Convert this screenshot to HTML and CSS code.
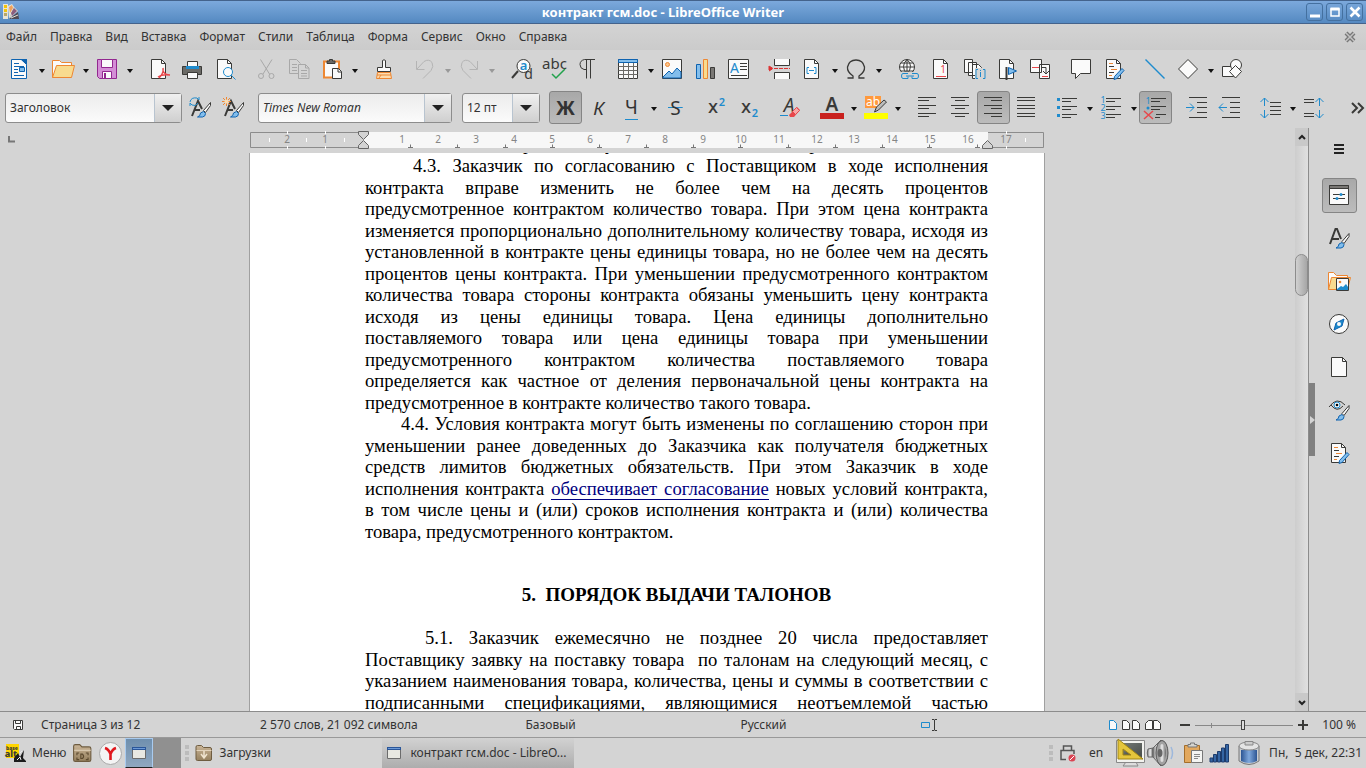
FILE: index.html
```html
<!DOCTYPE html>
<html lang="ru">
<head>
<meta charset="utf-8">
<title>контракт гсм.doc - LibreOffice Writer</title>
<link rel="stylesheet" href="styles.css">
</head>
<body>
<svg class="defs" aria-hidden="true">
  <defs>
    <linearGradient id="scr" x1="0" y1="0" x2="1" y2="1"><stop offset="0" stop-color="#777c78"/><stop offset="1" stop-color="#454a47"/></linearGradient>
    <linearGradient id="fold" x1="0" y1="0" x2="0" y2="1"><stop offset="0" stop-color="#c9b496"/><stop offset="1" stop-color="#96815f"/></linearGradient>
    <linearGradient id="blu" x1="0" y1="0" x2="1" y2="0"><stop offset="0" stop-color="#2d5694"/><stop offset=".5" stop-color="#7fa8dc"/><stop offset="1" stop-color="#2d5694"/></linearGradient>
    <linearGradient id="metal" x1="0" y1="0" x2="1" y2="0"><stop offset="0" stop-color="#777"/><stop offset=".5" stop-color="#eee"/><stop offset="1" stop-color="#666"/></linearGradient>
    <symbol id="i-brush" viewBox="0 0 14 16"><path class="p" d="M13.5.5l-7 8 2 2 5-7z"/><path d="M.5 15q3-1 3-4l3-1.500 2 2q0 3-3 3.500z" fill="#83beec" stroke="#0e63b0"/></symbol>
    <symbol id="i-note" viewBox="0 0 21 21"><path class="p" d="M2.500.5h10l4 4v15h-14z"/><path class="k" d="M12.500.5v4h4M5 7.500h5M5 13.500h5"/><path class="o" d="M5 4.500h4M7 10.500h6M5 16.500h3"/><path d="M18 9.500l2 2-7 8-3 1 .5-3z" fill="#83beec" stroke="#0e63b0"/></symbol>
    <symbol id="i-folder" viewBox="0 0 18 18"><path d="M1 3q0-1.500 1.500-1.500h4l2 2H15q1.500 0 1.500 1.500v10q0 1.500-1.500 1.500H2.500Q1 16.500 1 15z" fill="url(#fold)" stroke="#6e5c40"/><path d="M1.500 6.500h15" stroke="#e2d3bb"/></symbol>
    <symbol id="i-win" viewBox="0 0 14 12"><path d="M.5.5h13v11H.5z" fill="#e8e8e2" stroke="#6c6c6c"/><path d="M0 0h14v3H0z" fill="#2a5699"/><path d="M1 1.500h12" stroke="#6d9ad6"/></symbol>
  </defs>
</svg>

<header class="titlebar">
  <svg class="app-icon" width="16" height="16" viewBox="0 0 16 16"><path d="M0 0h5v15H0z" fill="#e8e4d8"/><path d="M1 1h3v3H1zM1 5h3v3H1z" fill="#f1c40c"/><path d="M1 9h3v3H1z" fill="#b9a86a"/><path d="M6 15L5 2l4-2 2 3z" fill="#e8e4d8"/><path d="M6 3l3-2 1 3-3 5z" fill="#f0a15c"/><path d="M6 15l5-12 4 4z" fill="#e0dccf"/><path d="M8 9l3-5 3 3-5 5z" fill="#8a5d7e"/><path d="M6 15l9-7 1 7z" fill="#4f4a55"/><path d="M8 14l7-3" stroke="#e8e0d4"/></svg>
  <h1>контракт гсм.doc - LibreOffice Writer</h1>
  <div class="win-buttons">
    <button aria-label="Свернуть"><svg width="16" height="16" viewBox="0 0 16 16"><path d="M3 12h10" stroke="#fff" stroke-width="3"/></svg></button>
    <button aria-label="Развернуть"><svg width="16" height="16" viewBox="0 0 16 16"><path d="M4 5h8v7H4z" fill="none" stroke="#fff" stroke-width="1.500"/><path d="M3.500 5h9" stroke="#fff" stroke-width="3"/></svg></button>
    <button aria-label="Закрыть"><svg width="16" height="16" viewBox="0 0 16 16"><path d="M3.500 3.500l9 9m0-9l-9 9" stroke="#fff" stroke-width="2.600"/></svg></button>
  </div>
</header>

<nav class="menubar">
  <button>Файл</button><button>Правка</button><button>Вид</button><button>Вставка</button><button>Формат</button><button>Стили</button><button>Таблица</button><button>Форма</button><button>Сервис</button><button>Окно</button><button>Справка</button>
  <button class="close-doc" aria-label="Закрыть документ"><svg width="12" height="12" viewBox="0 0 12 12"><path d="M2 2l8 8m0-8l-8 8" stroke="#777" stroke-width="4"/><path d="M2 2l8 8m0-8l-8 8" stroke="#c4c4c4" stroke-width="1.500"/></svg></button>
</nav>

<div class="toolbar standard">
  <div class="group">
    <button class="tool" aria-label="Создать"><svg viewBox="0 0 21 21"><path d="M2.500.5h10l5 5v14h-15z" fill="#fafafa" stroke="#0e63b0"/><path d="M11 0h7v6z" fill="#0e63b0"/><path d="M5 4.500h5M5 7.500h10M5 10.500h4M5 13.500h4M5 16.500h10" stroke="#0e63b0"/><path d="M10.500 8.500h5v4h-5z" fill="#83beec" stroke="#0e63b0"/></svg></button><button class="drop" aria-label="Меню создания"></button>
    <button class="tool" aria-label="Открыть"><svg class="wide" viewBox="0 0 23 21"><path d="M.5 18.500V1.500h7l2 2h10v3" fill="#fafafa" stroke="#ed8733"/><path d="M.5 18.500l4-12h18l-3 12z" fill="#f8db8f" stroke="#ed8733"/></svg></button><button class="drop" aria-label="Недавние файлы"></button>
    <button class="tool" aria-label="Сохранить"><svg viewBox="0 0 21 21"><path d="M.5.5h19v19H2.500l-2-2z" fill="#d48ed6" stroke="#92278f"/><path d="M4.500.5h11v8h-11zM5.500 12.500h9v7h-9z" fill="#fafafa" stroke="#92278f"/><path d="M8 14v5" stroke="#92278f" stroke-width="2"/></svg></button><button class="drop" aria-label="Варианты сохранения"></button>
  </div>
  <div class="group">
    <button class="tool" aria-label="Экспорт в PDF"><svg viewBox="0 0 21 21"><path class="p" d="M2.500.5h10l4 4v15h-14z"/><path class="k" d="M12.500.5v4h4"/><path d="M14 9q1 5-4 10M14 12q2 4 7 4M9 18q4-3 12-2" fill="none" stroke="#e8474b" stroke-width="1.500"/></svg></button>
    <button class="tool" aria-label="Печать"><svg viewBox="0 0 21 21"><path class="p" d="M5.500 2.500h10v6h-10z"/><path d="M.5 7.500h19v8H.5z" fill="#6b6a66" stroke="#3a3a38"/><path d="M4 7h13v3H4z" fill="#1e8bcd"/><path class="p" d="M5.500 13.500h10v6h-10z"/></svg></button>
    <button class="tool" aria-label="Просмотр печати"><svg viewBox="0 0 21 21"><path class="p" d="M2.500.5h10l4 4v15h-14z"/><path class="k" d="M12.500.5v4h4"/><circle cx="13" cy="13" r="4.500" fill="#fafafa" stroke="#1e8bcd"/><path class="b" d="M16 16l4.500 4.500"/></svg></button>
  </div>
  <div class="group">
    <button class="tool" disabled aria-label="Вырезать"><svg viewBox="0 0 21 21"><path class="g" d="M4.500.5l9 14.500M16 .5L7 15"/><circle class="g" cx="5" cy="17" r="2.500"/><circle class="g" cx="15.500" cy="17" r="2.500"/></svg></button>
    <button class="tool" disabled aria-label="Копировать"><svg viewBox="0 0 21 21"><path class="g" d="M9 14.500H.5V.5h7l4 4M3 5.500h5M3 8.500h5M3 11.500h5"/><path class="g" d="M9.500 5.500h7l3.500 3.500v10.500H9.500zM16.500 5.500V9h3.500M12 11.500h6M12 14.500h6M12 17h6"/></svg></button>
    <button class="tool" aria-label="Вставить"><svg viewBox="0 0 21 21"><path d="M2 2.500h15v16H2z" fill="#fafafa" stroke="#ed8733" stroke-width="2"/><path d="M5 4.500V2h2.500V.5h3V2H13v2.500z" fill="#6b6a66" stroke="#3a3a38"/><path class="p" d="M10.500 9.500h6l3 3v7h-9z"/><path class="k" d="M16 9.500v3.500h3.500"/></svg></button><button class="drop" aria-label="Варианты вставки"></button>
  </div>
  <div class="group">
    <button class="tool" aria-label="Копировать формат"><svg viewBox="0 0 21 21"><path class="p" d="M8.500 8.500V1.500Q10 0 11.500 1.500v7h5v4h-13v-4z"/><path d="M3.500 13.500h13l1 6h-15z" fill="#fddcae" stroke="#ed8733"/><path d="M3 16h14M5 19l2-3" class="o"/></svg></button>
  </div>
  <div class="group">
    <button class="tool" disabled aria-label="Отменить"><svg viewBox="0 0 21 21"><path class="g2" d="M1.500 2v8.500h8M2 10l7-7.500q5-3 8 1 2 4-1 8l-8 8"/></svg></button><button class="drop" disabled aria-label="История отмены"></button>
    <button class="tool" disabled aria-label="Вернуть"><svg viewBox="0 0 21 21"><path class="g2" d="M18.500 2v8.500h-8M18 10l-7-7.500q-5-3-8 1-2 4 1 8l8 8"/></svg></button><button class="drop" disabled aria-label="История возврата"></button>
  </div>
  <div class="group">
    <button class="tool" aria-label="Найти и заменить"><svg viewBox="0 0 21 21"><path d="M7 12L1 19" stroke="#3a3a38" stroke-width="2"/><circle class="p" cx="12.500" cy="7" r="6.500"/><text x="12.500" y="11" class="t-a">a</text><text x="17.500" y="20" class="t-d">d</text></svg></button>
    <button class="tool" aria-label="Проверка орфографии"><svg class="wide" viewBox="0 0 23 21"><text x="11.500" y="10" class="t-abc">abc</text><path d="M9 15l4 4 9-9" fill="none" stroke="#22a24c" stroke-width="1.500"/></svg></button>
    <button class="tool" aria-label="Непечатаемые символы"><svg viewBox="0 0 21 21"><path class="k" d="M9.500 10.500H7Q3 9.500 3 5.500T7.500.5H18M9.500.5v19M13.500.5v19"/></svg></button>
  </div>
  <div class="group">
    <button class="tool" aria-label="Таблица"><svg viewBox="0 0 21 21"><path class="p" d="M.5.5h19v19H.5z"/><path d="M.5.5h19v3H.5z" fill="#83beec" stroke="#0e63b0"/><path d="M.5 7.500h19M.5 11.500h19M.5 15.500h19M5.500 4v16M10.500 4v16M15.500 4v16" stroke="#6b6a66"/></svg></button><button class="drop" aria-label="Размер таблицы"></button>
    <button class="tool" aria-label="Изображение"><svg viewBox="0 0 21 21"><path class="p" d="M.5.5h19v19H.5z"/><circle cx="5.500" cy="5.500" r="2" fill="#fbc58b" stroke="#ed8733"/><path d="M1 18l6-6 3 3 5-6 4 4v6H1z" fill="#83beec" stroke="#0e63b0"/></svg></button>
    <button class="tool" aria-label="Диаграмма"><svg viewBox="0 0 21 21"><path d="M1.500 5.500h4v14h-4z" fill="#83beec" stroke="#0e63b0"/><path d="M8.500.5h4v19h-4z" fill="#f8db8f" stroke="#ed8733"/><path d="M15.500 8.500h4v11h-4z" fill="#797774" stroke="#3a3a38"/></svg></button>
    <button class="tool" aria-label="Текстовое поле"><svg class="wide" viewBox="0 0 23 21"><path class="p" d="M1.500.5h20v19h-20z"/><text x="7.500" y="14" class="t-box">A</text><path class="k" d="M13 4.500h7M13 7.500h7M13 10.500h7M4 16.500h16"/></svg></button>
  </div>
  <div class="group">
    <button class="tool" aria-label="Разрыв страницы"><svg viewBox="0 0 21 21"><path d="M6 0h14v7H6zM6 13h14v7H6z" fill="#fafafa"/><path class="k" d="M5.500 0v6.500h15V0M5.500 20v-6.500h15V20"/><path d="M0 7v5l4-2.500zM5 9.500h16" fill="#d33" stroke="#d33" stroke-dasharray="4 1"/></svg></button>
    <button class="tool" aria-label="Поле"><svg viewBox="0 0 21 21"><path class="p" d="M2.500.5h10l4 4v15h-14z"/><path class="k" d="M12.500.5v4h4"/><path class="b" d="M7 8.500H5v6h2M12 8.500h2v6h-2M7 11.500h5"/></svg></button><button class="drop" aria-label="Виды полей"></button>
    <button class="tool" aria-label="Специальный символ"><svg viewBox="0 0 21 21"><path d="M1.500 19h5.500v-2Q1 13 1.500 8 3 1 10 1t8.500 7q.5 5-5.500 9v2h5.500" fill="none" stroke="#3a3a38" stroke-width="1.300"/></svg></button><button class="drop" aria-label="Недавние символы"></button>
  </div>
  <div class="group">
    <button class="tool" aria-label="Гиперссылка"><svg viewBox="0 0 21 21"><circle class="p" cx="9" cy="8" r="7.500"/><path class="k" d="M9 .5v15M1.500 8h15M3 4h12M3 12h12M9 .5Q2 7 9 15.500M9 .5q7 6 0 15"/><path d="M3 13h18v8H3z" fill="#d4d4d4"/><path class="b" d="M10 14.500H5q-1.500 0-1.500 2.500T5 19.500h5v-2M14 14.500h5q1.500 0 1.500 2.500T19 19.500h-5v-2M8 17h8"/></svg></button>
    <button class="tool" aria-label="Сноска"><svg viewBox="0 0 21 21"><path class="p" d="M2.500.5h10l4 4v15h-14z"/><path class="k" d="M12.500.5v4h4"/><text x="12" y="14" class="t-fn">1</text><path d="M5 17.500h10" stroke="#e8474b"/></svg></button>
    <button class="tool" aria-label="Концевая сноска"><svg class="wide" viewBox="0 0 23 21"><path class="p" d="M1.500.5h8v13h-8zM5.500 3.500h8v13h-8zM9.500 5.500h6l3 3v11h-9z"/><path d="M12 9h11v12H12z" fill="#d4d4d4"/><path class="b" d="M15 10.500h-2v9h2M20 10.500h2v9h-2M17.500 13v5M17.500 11v1"/></svg></button>
    <button class="tool" aria-label="Закладка"><svg viewBox="0 0 21 21"><path class="p" d="M2.500.5h10l4 4v15h-14z"/><path class="k" d="M12.500.5v4h4"/><path d="M9.500 8v13" stroke="#3a3a38" stroke-width="2"/><path d="M11.500 8.500v7l8-3.500z" fill="#83beec" stroke="#0e63b0"/></svg></button>
    <button class="tool" aria-label="Перекрёстная ссылка"><svg viewBox="0 0 21 21"><path class="p" d="M9.500 5.500h10v14h-10zM.5.5h11v13H.5z"/><path class="k" d="M11 8.500h5v6M13 12l3 3 3-3"/><path d="M2 8.500h7M12 17.500h6" stroke="#e8474b"/></svg></button>
  </div>
  <div class="group">
    <button class="tool" aria-label="Комментарий"><svg viewBox="0 0 21 21"><path class="p" d="M.5.5h19v14h-10l-5 5v-5h-4z"/></svg></button>
    <button class="tool" aria-label="Запись изменений"><svg><use href="#i-note"/></svg></button>
  </div>
  <div class="group">
    <button class="tool" aria-label="Линия"><svg viewBox="0 0 21 21"><path d="M.5.5l19 19" stroke="#1e8bcd" stroke-width="1.400"/></svg></button>
    <button class="tool" aria-label="Фигуры"><svg viewBox="0 0 21 21"><path class="p" d="M10 .5l9.500 9.500-9.500 9.500L.5 10z"/></svg></button><button class="drop" aria-label="Выбор фигуры"></button>
    <button class="tool" aria-label="Рисование"><svg viewBox="0 0 21 21"><path class="p" d="M.5 7.500h11v10H.5z"/><circle class="p" cx="14" cy="6" r="5.500"/><path class="p" d="M13.500 6.500l6 6-6 6.500-6-6.500z"/></svg></button>
  </div>
</div>

<div class="toolbar formatting">
  <label class="combo style-combo"><select aria-label="Стиль абзаца"><option>Заголовок</option></select><span></span></label>
  <div class="group">
    <button class="tool" aria-label="Обновить стиль"><svg class="wide" viewBox="0 0 23 21"><path d="M3 19L9 4l4 8M5 13h6" fill="none" stroke="#3a3a38" stroke-width="2"/><path d="M1 5q1-5 7-4l2 2V0M9 6q-2 4-6 2L1 6v3" fill="none" stroke="#1e8bcd"/><use href="#i-brush" x="8" y="5" width="14" height="16"/></svg></button>
    <button class="tool" aria-label="Создать стиль"><svg class="wide" viewBox="0 0 23 21"><path d="M3 19L9 4l4 8M5 13h6" fill="none" stroke="#3a3a38" stroke-width="2"/><path d="M4.500 0v9M0 4.500h9M1 1l7 7M8 1L1 8" stroke="#ed8733"/><circle cx="4.500" cy="4.500" r="2" fill="#fddcae"/><use href="#i-brush" x="8" y="5" width="14" height="16"/></svg></button>
  </div>
  <label class="combo font-combo"><select aria-label="Имя шрифта"><option>Times New Roman</option></select><span></span></label>
  <label class="combo size-combo"><select aria-label="Размер шрифта"><option>12 пт</option></select><span></span></label>
  <div class="group">
    <button class="tool pressed letter bold" aria-label="Полужирный">Ж</button>
    <button class="tool letter ital" aria-label="Курсив">К</button>
    <button class="tool letter under" aria-label="Подчёркнутый"><span>Ч</span></button><button class="drop" aria-label="Вид подчёркивания"></button>
    <button class="tool letter strike" aria-label="Зачёркнутый"><span>S</span></button>
  </div>
  <div class="group">
    <button class="tool" aria-label="Верхний индекс"><svg viewBox="0 0 21 21"><text x="7" y="16" class="t-x">X</text><text x="16" y="9" class="t-2">2</text></svg></button>
    <button class="tool" aria-label="Нижний индекс"><svg viewBox="0 0 21 21"><text x="7" y="16" class="t-x">X</text><text x="16" y="20" class="t-2">2</text></svg></button>
  </div>
  <div class="group">
    <button class="tool" aria-label="Очистить форматирование"><svg viewBox="0 0 21 21"><text x="9" y="15" class="t-clear">A</text><path class="b" d="M0 18.500h8"/><path d="M9 18l8-8 3 3-6 7h-4z" fill="#e8474b"/><path d="M12.500 14.500l4-4 3 3-4 4z" fill="#f7a7a7" stroke="#e8474b"/></svg></button>
  </div>
  <div class="group">
    <button class="tool" aria-label="Цвет шрифта"><svg class="color" viewBox="0 0 24 24"><text x="12" y="15" class="t-color">A</text><path d="M0 17h24v6H0z" fill="#c9211e"/></svg></button><button class="drop" aria-label="Выбор цвета шрифта"></button>
    <button class="tool" aria-label="Цвет выделения"><svg class="color" viewBox="0 0 24 24"><path d="M1 0h16v12H1z" fill="#ff993c"/><text x="9" y="10" class="t-ab">ab</text><path d="M20 4l2.500 2-8 8-4 2 2-5z" fill="#bbb" stroke="#3a3a38"/><path d="M0 17h24v6H0z" fill="#ff0"/></svg></button><button class="drop" aria-label="Выбор цвета выделения"></button>
  </div>
  <div class="group">
    <button class="tool" aria-label="По левому краю"><svg viewBox="0 0 21 21"><path class="k" d="M1 .5h18M1 3.500h11M1 8.500h18M1 11.500h11M1 16.500h18M1 19.500h11"/></svg></button>
    <button class="tool" aria-label="По центру"><svg viewBox="0 0 21 21"><path class="k" d="M1 .5h18M5 3.500h10M1 8.500h18M5 11.500h10M1 16.500h18M5 19.500h10"/></svg></button>
    <button class="tool pressed" aria-label="По правому краю"><svg viewBox="0 0 21 21"><path class="k" d="M1 .5h18M8 3.500h11M1 8.500h18M8 11.500h11M1 16.500h18M8 19.500h11"/></svg></button>
    <button class="tool" aria-label="По ширине"><svg viewBox="0 0 21 21"><path class="k" d="M1 .5h18M1 3.500h18M1 8.500h18M1 11.500h18M1 16.500h18M1 19.500h18"/></svg></button>
  </div>
  <div class="group">
    <button class="tool" aria-label="Маркированный список"><svg viewBox="0 0 21 21"><path class="k" d="M5 1.500h15M5 4.500h9M5 9.500h15M5 12.500h9M5 17.500h15M5 20.500h9"/><path d="M0 1h3v3H0zM0 9h3v3H0zM0 17h3v3H0z" fill="#1e8bcd"/></svg></button><button class="drop" aria-label="Вид маркеров"></button>
    <button class="tool" aria-label="Нумерованный список"><svg viewBox="0 0 21 21"><path class="k" d="M5 1.500h15M5 4.500h9M5 9.500h15M5 12.500h9M5 17.500h15M5 20.500h9"/><text x="2" y="6" class="t-n">1</text><text x="2" y="14" class="t-n">2</text><text x="2" y="22" class="t-n">3</text></svg></button><button class="drop" aria-label="Вид нумерации"></button>
    <button class="tool pressed" aria-label="Без списка"><svg viewBox="0 0 21 21"><path class="k" d="M6 1.500h15M6 4.500h9M6 9.500h15M6 12.500h9M11 17.500h10M10 20.500h5"/><text x="3" y="7" class="t-n">1</text><circle cx="3" cy="11" r="1.500" fill="#1e8bcd"/><path d="M-1 14l9 8M8 14l-9 8" stroke="#e8474b" stroke-width="1.500"/></svg></button>
  </div>
  <div class="group">
    <button class="tool" aria-label="Увеличить отступ"><svg viewBox="0 0 21 21"><path class="k" d="M3 .5h18M11 5.500h10M11 10.500h10M11 15.500h10M3 20.500h18"/><path class="b" d="M0 10.500h8M4 6.500l4 4-4 4"/></svg></button>
    <button class="tool" aria-label="Уменьшить отступ"><svg viewBox="0 0 21 21"><path class="k" d="M3 .5h18M11 5.500h10M11 10.500h10M11 15.500h10M3 20.500h18"/><path class="b" d="M0 10.500h8M4 6.500l-4 4 4 4"/></svg></button>
  </div>
  <div class="group">
    <button class="tool" aria-label="Интервал строк"><svg viewBox="0 0 21 21"><path class="k" d="M10 5.500h11M10 9.500h11M10 13.500h11M10 17.500h11"/><path class="b" d="M4.500 1v8M.5 5l4-4 4 4M4.500 13v8M.5 17l4 4 4-4"/></svg></button><button class="drop" aria-label="Выбор интервала"></button>
    <button class="tool" aria-label="Интервал абзаца"><svg viewBox="0 0 21 21"><path class="k" d="M0 2.500h10M0 5.500h10M0 16.500h10M0 19.500h10"/><path class="b" d="M15.500 1v8M11.500 5l4-4 4 4M15.500 13v8M11.500 17l4 4 4-4"/></svg></button>
  </div>
  <button class="more" aria-label="Ещё"><svg width="13" height="12" viewBox="0 0 13 12"><path d="M1 1l5 5-5 5M7 1l5 5-5 5" fill="none" stroke="#3a3a38" stroke-width="2"/></svg></button>
</div>

<main class="work">
  <section class="editor">
    <div class="ruler-row">
      <svg class="corner" width="8" height="7" viewBox="0 0 8 7"><path d="M1 0v5.500h6" fill="none" stroke="#777" stroke-width="2"/></svg>
      <svg class="ruler" viewBox="0 0 794 18" width="794" height="18">
        <path d="M.5 1.500h793v15H.5z" fill="#d4d4d4" stroke="#8c8c8c"/>
        <path d="M113 1h625v16H113z" fill="#f7f7f7"/>
        <path d="M19.500 7v4M56.500 7v4M94.500 7v4M37.500 0v3M37.500 15v3M75.500 0v3M75.500 15v3M756.500 0v3M756.500 15v3M775.500 7v4" stroke="#fff"/>
        <g class="ruler-n"><text x="37" y="12">2</text><text x="75" y="12">1</text><text x="152" y="12">1</text><text x="188" y="12">2</text><text x="226" y="12">3</text><text x="264" y="12">4</text><text x="302" y="12">5</text><text x="340" y="12">6</text><text x="378" y="12">7</text><text x="415" y="12">8</text><text x="453" y="12">9</text><text x="491" y="12">10</text><text x="529" y="12">11</text><text x="567" y="12">12</text><text x="604" y="12">13</text><text x="642" y="12">14</text><text x="680" y="12">15</text><text x="718" y="12">16</text><text x="756" y="12">17</text></g>
        <path d="M158 16.500h5m-2.500-3v3M205 16.500h5m-2.500-3v3M253 16.500h5m-2.500-3v3M300 16.500h5m-2.500-3v3M347 16.500h5m-2.500-3v3M394 16.500h5m-2.500-3v3M441 16.500h5m-2.500-3v3M488 16.500h5m-2.500-3v3M536 16.500h5m-2.500-3v3M583 16.500h5m-2.500-3v3M630 16.500h5m-2.500-3v3M677 16.500h5m-2.500-3v3M725 16.500h5m-2.500-3v3" stroke="#777" fill="none"/>
        <path d="M108.500.5h10v3l-5 5-5-5zM113.500 9.500l5 5v3h-10v-3zM737.500 9.500l5 5v3h-10v-3z" fill="#d4d4d4" stroke="#666"/>
      </svg>
    </div>
    <div class="canvas">
      <article class="page">
        <p class="above"><span class="w1">при</span><span class="w2">условии</span><span class="w3">срок</span></p>
        <p><span class="line in48">4.3. Заказчик по согласованию с Поставщиком в ходе исполнения</span> <span class="line">контракта вправе изменить не более чем на десять процентов</span> <span class="line">предусмотренное контрактом количество товара. При этом цена контракта</span> <span class="line">изменяется пропорционально дополнительному количеству товара, исходя из</span> <span class="line">установленной в контракте цены единицы товара, но не более чем на десять</span> <span class="line">процентов цены контракта. При уменьшении предусмотренного контрактом</span> <span class="line">количества товара стороны контракта обязаны уменьшить цену контракта</span> <span class="line">исходя из цены единицы товара. Цена единицы дополнительно</span> <span class="line">поставляемого товара или цена единицы товара при уменьшении</span> <span class="line">предусмотренного контрактом количества поставляемого товара</span> <span class="line">определяется как частное от деления первоначальной цены контракта на</span> <span class="line last">предусмотренное в контракте количество такого товара.</span></p>
        <p><span class="line in36">4.4. Условия контракта могут быть изменены по соглашению сторон при</span> <span class="line">уменьшении ранее доведенных до Заказчика как получателя бюджетных</span> <span class="line">средств лимитов бюджетных обязательств. При этом Заказчик в ходе</span> <span class="line">исполнения контракта <a href="#soglasovanie">обеспечивает согласование</a> новых условий контракта,</span> <span class="line">в том числе цены и (или) сроков исполнения контракта и (или) количества</span> <span class="line last">товара, предусмотренного контрактом.</span></p>
        <h2>5.&nbsp; ПОРЯДОК ВЫДАЧИ ТАЛОНОВ</h2>
        <p><span class="line in60">5.1. Заказчик ежемесячно не позднее 20 числа предоставляет</span> <span class="line">Поставщику заявку на поставку товара&nbsp; по талонам на следующий месяц, с</span> <span class="line">указанием наименования товара, количества, цены и суммы в соответствии с</span> <span class="line">подписанными спецификациями, являющимися неотъемлемой частью</span></p>
      </article>
    </div>
  </section>
  <div class="scrollbar">
    <button aria-label="Вверх"><svg width="8" height="5" viewBox="0 0 8 5"><path d="M1 4l3-3 3 3" fill="none" stroke="#222" stroke-width="2"/></svg></button>
    <div class="track"><div class="thumb"></div></div>
    <button aria-label="Вниз"><svg width="8" height="5" viewBox="0 0 8 5"><path d="M1 1l3 3 3-3" fill="none" stroke="#222" stroke-width="2"/></svg></button>
  </div>
  <aside class="sidebar">
    <button class="handle" aria-label="Скрыть панель"><svg width="5" height="8" viewBox="0 0 5 8"><path d="M0 0l5 4-5 4z" fill="#d4d4d4"/></svg></button>
    <div class="tabs">
      <button class="tab menu" aria-label="Параметры панели"><svg viewBox="0 0 21 21"><path d="M5 6h10M5 10h10M5 14h10" stroke="#222" stroke-width="2"/></svg></button>
      <button class="tab pressed" aria-label="Свойства"><svg viewBox="0 0 21 21"><path class="p" d="M.5.5h19v19H.5z"/><path d="M.5.5h19v3H.5z" fill="#797774" stroke="#3a3a38"/><path class="k" d="M4 9.500h12M4 13.500h12"/><circle cx="12" cy="9.500" r="1.500" fill="#1e8bcd"/><circle cx="8" cy="13.500" r="1.500" fill="#1e8bcd"/></svg></button>
      <button class="tab" aria-label="Стили"><svg viewBox="0 0 21 21"><path d="M1 16L6.500 1h1.500L12 11M3 11h7" fill="none" stroke="#3a3a38" stroke-width="2"/><use href="#i-brush" x="6" y="5" width="15" height="16"/></svg></button>
      <button class="tab" aria-label="Галерея"><svg class="wide" viewBox="0 0 23 21"><path d="M.5 18.500V1.500h5l3 3h11v2" fill="#fafafa" stroke="#ed8733"/><path d="M.5 18.500l3-12h19l-3 12z" fill="#f8db8f" stroke="#ed8733"/><path class="p" d="M8.500 7.500h12v12h-12z"/><circle cx="12" cy="11" r="1.300" fill="#ed8733"/><path d="M9 18l4-3 2 1 3-3 2 3v3H9z" fill="#1e8bcd"/></svg></button>
      <button class="tab" aria-label="Навигатор"><svg viewBox="0 0 21 21"><circle class="p" cx="10" cy="10" r="9.500"/><path d="M15 5l-2 7-8 4 2-7z" fill="#1e8bcd" stroke="#0e63b0"/><circle cx="10" cy="10" r="2" fill="#fafafa"/></svg></button>
      <button class="tab" aria-label="Страница"><svg viewBox="0 0 21 21"><path class="p" d="M2.500.5h11l4 4v15h-15z"/><path class="k" d="M13.500.5v4h4"/></svg></button>
      <button class="tab" aria-label="Инспектор стилей"><svg viewBox="0 0 21 21"><path class="k" d="M0 7Q8-4 16 5M2 5q6 8 12 1"/><circle cx="8" cy="5" r="3" fill="#fafafa" stroke="#1e8bcd"/><circle cx="8" cy="5" r="1.300"/><use href="#i-brush" x="6" y="5" width="15" height="16"/></svg></button>
      <button class="tab" aria-label="Управление изменениями"><svg><use href="#i-note"/></svg></button>
    </div>
  </aside>
</main>

<footer class="statusbar">
  <svg class="s-save" width="10" height="10" viewBox="0 0 10 10"><path class="p" d="M.5.5h9v9h-8l-1-1z"/><path class="k" d="M2.500.5v3h5v-3M3.500 9.500v-3h4v3"/></svg>
  <span class="s-page">Страница 3 из 12</span>
  <span class="s-words">2 570 слов, 21 092 символа</span>
  <span class="s-style">Базовый</span>
  <span class="s-lang">Русский</span>
  <svg class="s-ins" width="17" height="12" viewBox="0 0 17 12"><path d="M.5 3.500h8v5h-8z" fill="none" stroke="#1e8bcd"/><path class="k" d="M11 .5h2l.5.5.5-.5h2M13.500 1v10M11 11.500h2l.5-.5.5.5h2"/></svg>
  <div class="views">
    <button aria-label="Одна страница"><svg width="8" height="10" viewBox="0 0 8 10"><path d="M.5.5h4l3 3v6h-7z" fill="#fafafa" stroke="#1e8bcd"/></svg></button>
    <button aria-label="Несколько страниц"><svg width="18" height="10" viewBox="0 0 18 10"><path class="p" d="M.5.5h4l3 3v6h-7zM10.500.5h4l3 3v6h-7z"/></svg></button>
    <button aria-label="Режим книги"><svg width="16" height="10" viewBox="0 0 16 10"><path class="p" d="M7.500.5h-4l-3 3v6h7zM8.500.5h4l3 3v6h-7z"/></svg></button>
  </div>
  <div class="zoom">
    <button aria-label="Уменьшить"><svg width="10" height="10" viewBox="0 0 10 10"><path d="M0 5h10" stroke="#3a3a38" stroke-width="2"/></svg></button>
    <input type="range" min="0" max="100" value="49" aria-label="Масштаб">
    <button aria-label="Увеличить"><svg width="10" height="10" viewBox="0 0 10 10"><path d="M0 5h10M5 0v10" stroke="#3a3a38" stroke-width="2"/></svg></button>
  </div>
  <span class="s-zoom">100 %</span>
</footer>

<footer class="taskbar">
  <button class="start"><svg width="23" height="19" viewBox="0 0 23 19"><path d="M2 0h13v14H2z" fill="#ffd500"/><text x="8" y="6" class="t-base">base</text><text x="7" y="13" class="t-alt">alt</text><path d="M10 14l4-5 2 4 4-7-1 8 3 3v1H10z" fill="#1b1b1b"/><path d="M13 16l3-3 1 3M16 9l2-2" stroke="#eee" fill="none"/></svg>Меню</button>
  <button class="launch" aria-label="Рабочий стол"><svg width="21" height="20" viewBox="0 0 18 18"><use href="#i-folder"/><path d="M4 11V9h2M12 9h2v2M4 13v2h2M12 15h2v-2" fill="none" stroke="#5c4a2f"/><path d="M7.500 10v4H9q2-2 0-4z" fill="none" stroke="#5c4a2f"/></svg></button>
  <button class="launch" aria-label="Яндекс Браузер"><svg width="23" height="23" viewBox="0 0 23 23"><circle cx="11.500" cy="11.500" r="11" fill="#f4f4f4" stroke="#aaa"/><path d="M6 6q3.500 1 5.500 6m5.500-6q-3.500 1-5.500 6v6" fill="none" stroke="#e0171d" stroke-width="2.600"/></svg></button>
  <div class="pager"><button class="desk on" aria-label="Стол 1"><svg width="14" height="12"><use href="#i-win"/></svg></button><button class="desk" aria-label="Стол 2"></button></div>
  <span class="grip"></span>
  <button class="task downloads"><svg width="18" height="18"><use href="#i-folder"/><path d="M9 7v6M6 10l3 4 3-4" fill="none" stroke="#f0e4cf" stroke-width="1.500"/></svg>Загрузки</button>
  <button class="task current"><svg width="14" height="12"><use href="#i-win"/></svg><span>контракт гсм.doc - LibreO...</span></button>
  <div class="tray">
    <span class="grip"></span>
    <svg class="t-print" width="18" height="18" viewBox="0 0 18 18"><path d="M4.500 6V2h8v4M3 15.500H2v-9h13V10M2 15.500h5" fill="none" stroke="#555" stroke-width="1.500"/><circle cx="13" cy="14" r="3.500" fill="#da4453"/><path d="M11 16l4-4" stroke="#fff"/></svg>
    <span class="lang">en</span>
    <svg width="32" height="30" viewBox="0 0 32 30"><path d="M12 24h10l2 4H9z" fill="#ddd" stroke="#888"/><path d="M2.500 2.500h28v22h-28z" fill="#f2f2ee" stroke="#888"/><path d="M5 5h23v16H5z" fill="url(#scr)"/><path d="M4 1v20h25z" fill="#e5c63c" stroke="#a08514"/><path d="M9 11v6h8z" fill="url(#scr)" stroke="#a08514"/></svg>
    <svg width="28" height="28" viewBox="0 0 28 28"><path d="M2 10q-1.500 4 0 8h5V9z" fill="url(#metal)" stroke="#666"/><path d="M7 9l8-8v26l-8-9z" fill="url(#metal)" stroke="#666"/><ellipse cx="16" cy="14" rx="6" ry="12.500" fill="#a2a2a2" stroke="#555"/><ellipse cx="16" cy="14" rx="4" ry="9" fill="url(#metal)"/><ellipse cx="14" cy="14" rx="2.500" ry="4" fill="#666"/><path d="M25 8q3 6 0 12" stroke="#9db8dc" fill="none" stroke-width="1.500"/></svg>
    <svg class="t-clip" width="20" height="22" viewBox="0 0 20 22"><path d="M1.500 3.500h15v17h-15z" fill="#e2a85e" stroke="#a46e2b"/><path d="M5 5V2.500h2.500V1h4v1.500H14V5z" fill="#d4d4d0" stroke="#777"/><path d="M8.500 8.500h11v12h-11z" fill="#f4f4f2" stroke="#777"/><path d="M11 12.500h6M11 14.500h6M11 16.500h4" stroke="#888"/></svg>
    <svg class="t-net" width="20" height="20" viewBox="0 0 20 20"><path d="M1 15h3v4H1zM4.500 11.500h3V19h-3zM8.500 8.500h3V19h-3zM12.500 5h3v14h-3zM16.500 1.500h3V19h-3z" fill="#3465a4" stroke="#1c3b6c"/></svg>
    <svg class="t-disk" width="22" height="26" viewBox="0 0 22 26"><path d="M1 6v15q10 7 20 0V6z" fill="#c8cdd2" stroke="#777"/><path d="M3 10v11q8 4 16 0V10z" fill="url(#blu)"/><ellipse cx="11" cy="6" rx="10" ry="4" fill="#e4e4e4" stroke="#888"/><path d="M7 5V1.500h8V5z" fill="#ccc" stroke="#888"/></svg>
    <time>Пн,&nbsp; 5 дек, 22:31</time>
  </div>
</footer>
</body>
</html>
```
FILE: styles.css
```css
* { box-sizing: border-box; }
body {
  margin: 0;
  height: 100vh;
  display: flex;
  flex-direction: column;
  overflow: hidden;
  background: #d4d4d4;
  color: #333;
  font: 12px/18px "Noto Sans", sans-serif;
}
button {
  margin: 0;
  padding: 0;
  border: 0;
  background: none;
  color: inherit;
  font: inherit;
  display: flex;
  align-items: center;
  justify-content: center;
  flex: none;
}
svg { display: block; flex: none; overflow: visible; }
.defs { position: absolute; width: 0; height: 0; }
.p { fill: #fafafa; stroke: #3a3a38; }
.k { fill: none; stroke: #3a3a38; }
.b { fill: none; stroke: #1e8bcd; }
.o { fill: none; stroke: #ed8733; }
.g { fill: none; stroke: #a8a8a8; }
.g2 { fill: none; stroke: #b4b4b4; }
svg text { text-anchor: middle; fill: #3a3a38; }

/* Title bar */
.titlebar {
  display: flex;
  align-items: center;
  height: 24px;
  padding: 0 3px;
  flex: none;
  border-top: 1px solid #44638c;
  border-bottom: 1px solid #44638c;
  background: linear-gradient(#7ca9dc, #5489c1);
}
.titlebar h1 {
  flex: 1;
  margin: 0 0 0 1px;
  text-align: center;
  font-size: 13px;
  line-height: 18px;
  font-weight: 700;
  color: #fff;
}
.win-buttons { display: flex; gap: 3px; }
.win-buttons button {
  width: 17px;
  height: 18px;
  border: 1px solid #44709f;
  border-radius: 3px;
}

/* Menu bar */
.menubar {
  display: flex;
  align-items: center;
  gap: 13px;
  height: 26px;
  padding: 0 10px 0 6px;
  flex: none;
  background: linear-gradient(#d3d3d3, #cbcbcb);
}
.close-doc { margin-left: auto; }

/* Toolbars */
.toolbar { display: flex; align-items: center; flex: none; height: 39px; gap: 8px; }
.standard { padding-left: 3px; }
.formatting { padding: 0 2px 2px 5px; }
.group { display: flex; align-items: center; }
.tool { width: 33px; height: 33px; border-radius: 3px; }
.tool svg, .tab svg { width: 21px; height: 21px; }
.tool svg.wide, .tab svg.wide { width: 23px; }
.tool svg.color { width: 24px; height: 24px; }
.drop { width: 11px; height: 33px; }
.drop::after {
  content: "";
  margin-top: 3px;
  border: 3px solid transparent;
  border-top: 4px solid #111;
  border-bottom: 0;
}
.drop:disabled::after { border-top-color: #999; }
.pressed {
  background: linear-gradient(#a8a8a8, #bcbcbc);
  border: 1px solid #858585;
  border-radius: 3px;
}
.letter { font-size: 19px; line-height: 24px; }
.bold { font-weight: 700; }
.ital { font-style: italic; }
.under span { height: 25px; border-bottom: 1px solid #1e8bcd; line-height: 24px; }
.strike span {
  padding: 0 2px;
  background: linear-gradient(#1e8bcd, #1e8bcd) center / 100% 1px no-repeat;
}
.combo {
  display: grid;
  grid-template-columns: 1fr 27px;
  height: 30px;
  flex: none;
  border: 1px solid #8c8c8c;
  border-radius: 3px;
  background: linear-gradient(#ececec, #fbfbfb);
}
.combo select {
  grid-area: 1 / 1 / 2 / 3;
  appearance: none;
  border: 0;
  background: none;
  padding: 0 4px;
  color: #333;
  font: inherit;
}
.combo span {
  grid-area: 1 / 2;
  display: flex;
  align-items: center;
  justify-content: center;
  pointer-events: none;
  border-left: 1px solid #b8c4d0;
  background: linear-gradient(#f0f0f0, #cfcfcf);
}
.combo span::after {
  content: "";
  border: 6px solid transparent;
  border-top-color: #222;
  border-bottom: 0;
}
.style-combo { width: 177px; margin-right: -6px; }
.font-combo { width: 194px; font-style: italic; }
.size-combo { width: 78px; margin: 0 1px 0 2px; }
.more { margin-left: auto; }
svg .t-a { font-size: 13px; font-weight: 600; fill: #1e8bcd; }
svg .t-d { font-size: 14px; }
svg .t-abc { font-size: 15px; }
svg .t-box { font-size: 14px; fill: #1e8bcd; }
svg .t-fn { font-size: 10px; fill: #e8474b; }
svg .t-x { font-size: 15px; font-weight: 600; }
svg .t-2 { font-size: 11px; font-weight: 600; fill: #1e8bcd; }
svg .t-clear { font-size: 19px; font-style: italic; }
svg .t-color { font-size: 19px; font-weight: 600; }
svg .t-ab { font-size: 12px; fill: #fff; }
svg .t-n { font-size: 9px; fill: #1e8bcd; }
svg .t-base { font-size: 5px; font-weight: 800; }
svg .t-alt { font-size: 9px; font-weight: 800; }

/* Work area */
.work { flex: 1; min-height: 0; display: flex; border-bottom: 1px solid #8c8c8c; }
.editor { flex: 1; min-width: 0; display: flex; flex-direction: column; padding-right: 1px; }
.ruler-row {
  display: grid;
  grid-template-columns: 1fr auto 1fr;
  align-items: center;
  height: 25px;
  padding-bottom: 2px;
  flex: none;
}
.corner { margin-left: 8px; }
.ruler-n { font-size: 10px; }
svg .ruler-n text { fill: #858585; }
.canvas { flex: 1; min-height: 0; overflow: hidden; display: flex; justify-content: center; }
.page {
  width: 796px;
  flex: none;
  min-height: 100%;
  border: 1px solid #a0a0a0;
  border-width: 0 1px;
  padding: 0 56px 0 115px;
  background: #fff;
  color: #000;
  font: 14pt/22px "Liberation Serif", "Times New Roman", serif;
}
.page p { margin: 0; }
.line { display: block; text-align: justify; text-align-last: justify; }
.line:nth-child(even) { line-height: 21px; }
.line.last { text-align-last: left; }
.in48 { padding-left: 48px; }
.in36 { padding-left: 36px; }
.in60 { padding-left: 60px; }
.page .above { display: flex; height: 22px; margin-top: -20px; }
.w1 { margin-left: 148px; width: 92px; }
.w2 { width: 196px; }
.page h2 { margin: 42px 0 21px; text-align: center; font-size: 19px; line-height: 22px; font-weight: 700; }
.page a { color: #000080; text-decoration: none; border-bottom: 1px solid #000080; }

.scrollbar {
  width: 14px;
  display: flex;
  flex-direction: column;
  border-right: 1px solid #8c8c8c;
  background: linear-gradient(90deg, #cdcdcd, #e0e0e0);
}
.scrollbar button { height: 18px; background: #c9c9c9; }
.track { flex: 1; padding-top: 108px; }
.thumb {
  height: 42px;
  border: 1px solid #8c8c8c;
  border-radius: 7px;
  background: linear-gradient(90deg, #d0d0d0, #a6a6a6);
}

.sidebar { width: 57px; display: flex; }
.handle { width: 6px; height: 73px; background: #808080; align-self: center; }
.tabs { display: flex; flex-direction: column; align-items: center; width: 48px; gap: 8px; padding: 4px 0; }
.tab { width: 35px; height: 35px; }
.tab.menu { margin-bottom: 3px; }

/* Status bar */
.statusbar { display: flex; align-items: center; height: 25px; flex: none; padding: 0 10px 0 13px; }
.s-page { margin-left: 18px; flex: 218; }
.s-words { flex: 264; }
.s-style { flex: 214; }
.s-lang { flex: 180; }
.views { display: flex; gap: 5px; margin-left: 171px; }
.zoom { display: flex; align-items: center; gap: 5px; margin: 0 14px 0 19px; }
.zoom input {
  appearance: none;
  width: 98px;
  height: 14px;
  margin: 0;
  background:
    linear-gradient(#888, #888) 16px 5px / 1px 5px no-repeat,
    linear-gradient(#888, #888) 0 7px / 100% 1px no-repeat;
}
.zoom input::-webkit-slider-thumb {
  appearance: none;
  width: 4px;
  height: 10px;
  border: 1px solid #444;
  background: #ddd;
}

/* Taskbar */
.taskbar {
  display: flex;
  align-items: center;
  height: 31px;
  flex: none;
  padding: 0 4px;
  border-top: 1px solid #999;
}
.start { gap: 5px; }
.launch { margin-left: 6px; }
.pager { display: flex; align-self: stretch; margin: 0 4px 0 3px; }
.desk { width: 28px; background: #909090; }
.desk.on { background: linear-gradient(#6f8fae, #90a8c0); border: 1px solid #a9cbef; border-bottom-color: #222; }
.grip {
  width: 4px;
  height: 16px;
  background: repeating-linear-gradient(#bcbcbc 0 4px, transparent 4px 6px);
}
.task { align-self: stretch; justify-content: flex-start; }
.downloads { width: 193px; padding-left: 6px; gap: 6px; }
.current { width: 192px; padding-left: 5px; gap: 9px; background: linear-gradient(#d2d2d2, #adadad); }
.task { white-space: nowrap; }
.tray { display: flex; align-items: center; margin-left: auto; }
.t-print { margin-left: 6px; }
.lang { margin: 0 11px 0 12px; }
.t-clip { margin-left: 9px; }
.t-net { margin-left: 6px; }
.t-disk { margin: 0 9px; }
```
